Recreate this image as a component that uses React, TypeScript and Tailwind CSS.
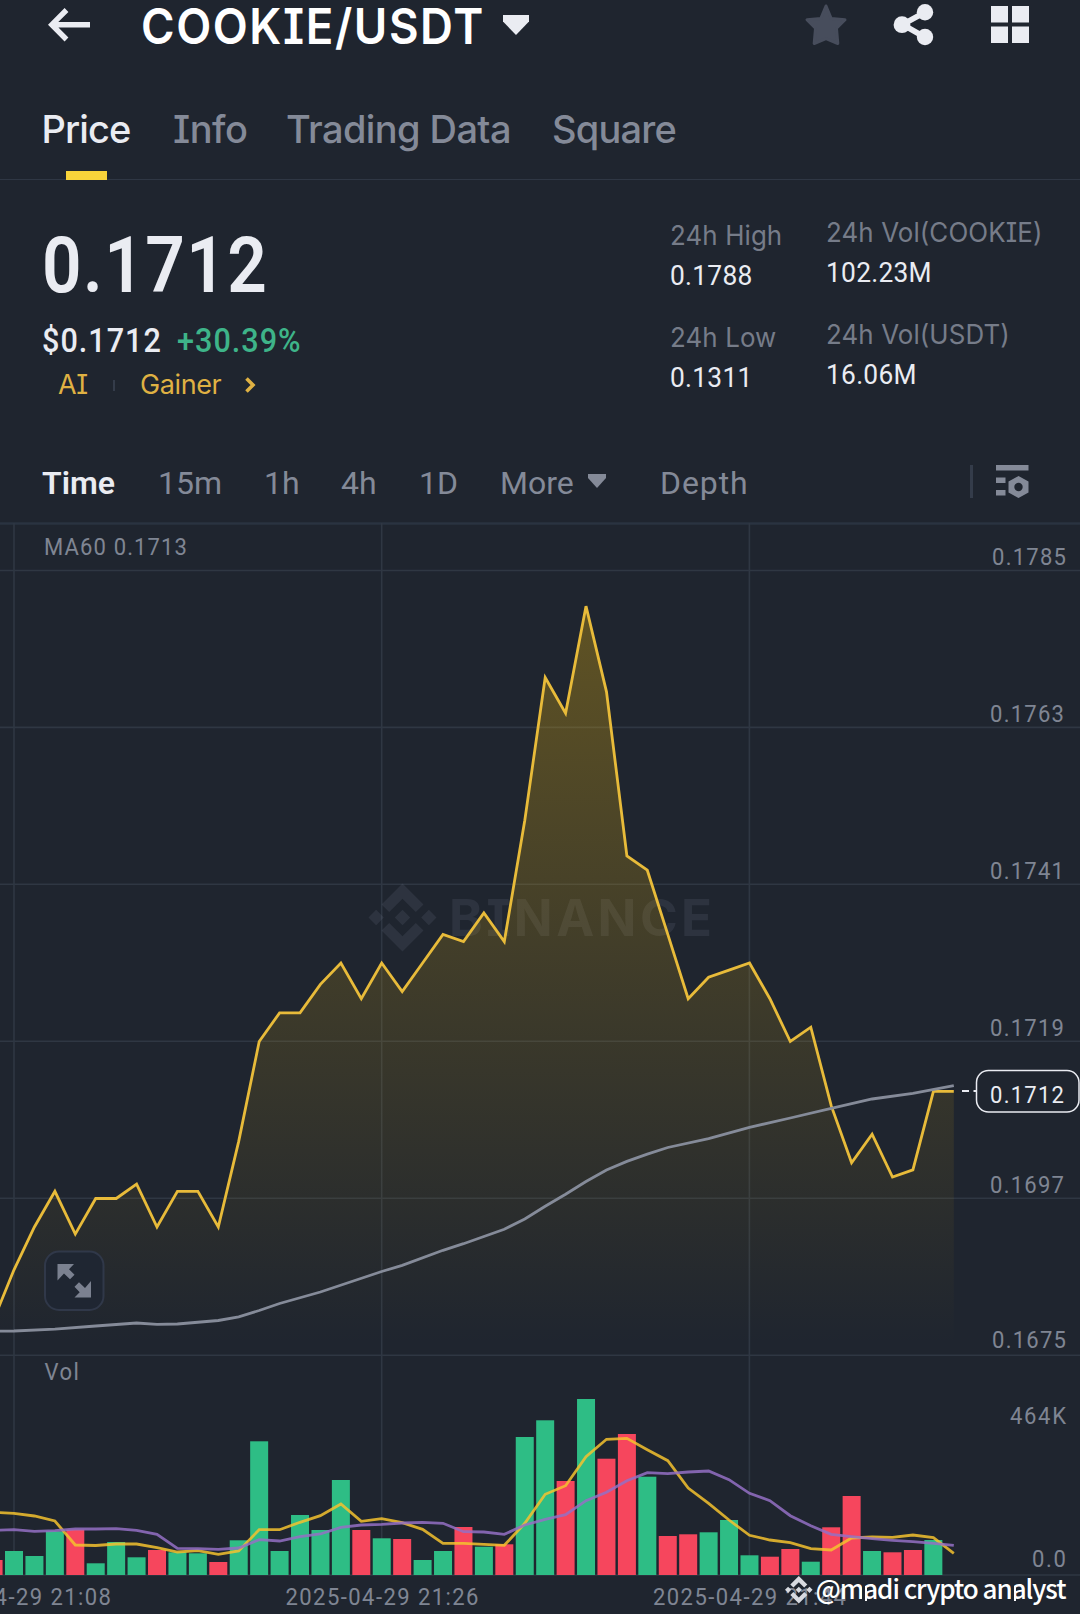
type Side = 'up' | 'down';

const STEP = 20.43;
const FIRST_X = 14;
const PRICE_TOP = 570.5;
const PX_PER_TICK = 7.136;
const VOL_BASE = 1575;

// One minute closes in ticks of 0.0001, starting one candle left of the viewport
const closes = [
    1680, 1687, 1693, 1698, 1692, 1697, 1697, 1699, 1693, 1698, 1698, 1693, 1705, 1719, 1723, 1723,
    1727, 1730, 1725, 1730, 1726, 1730, 1734, 1733, 1737, 1733, 1750, 1770, 1765, 1780, 1768, 1745,
    1743, 1734, 1725, 1728, 1729, 1730, 1725, 1719, 1721, 1710, 1702, 1706, 1700, 1701, 1712, 1712,
];

const ma60: [number, number][] = [
    [-1, 1331.3], [0, 1331], [2, 1329.2], [4, 1326], [6, 1323], [7, 1324.3], [8, 1324], [10, 1320.5], [11, 1316.8],
    [12, 1310.5], [13, 1303.5], [15, 1292], [18, 1271.5], [19, 1265.3], [21, 1250.3], [22, 1243.7], [23, 1236.5],
    [24, 1229.3], [25, 1219], [26, 1206.2], [27, 1194.3], [28, 1181.5], [29, 1170], [30, 1161.4], [31, 1154.2],
    [32, 1147.5], [34, 1138.7], [36, 1127.4], [38, 1118], [40, 1108.3], [42, 1099], [44, 1093.4], [46, 1085.7],
];

const volumes: [number, Side][] = [
    [15, 'down'], [24, 'up'], [19, 'up'], [43.7, 'up'], [45.3, 'down'], [11.7, 'up'], [33, 'up'], [17.7, 'up'],
    [25, 'down'], [22.7, 'up'], [21.7, 'up'], [13, 'down'], [34.7, 'up'], [133.7, 'up'], [24, 'up'], [60, 'up'],
    [45, 'up'], [95, 'up'], [45, 'down'], [36.7, 'up'], [36, 'down'], [15, 'up'], [24, 'up'], [48, 'down'],
    [28.3, 'up'], [30.7, 'down'], [138, 'up'], [154.7, 'up'], [94, 'down'], [176, 'up'], [116.3, 'down'],
    [141, 'down'], [98.3, 'up'], [39, 'down'], [40.7, 'down'], [42.7, 'up'], [55, 'up'], [19.7, 'up'],
    [18.3, 'down'], [26, 'down'], [13.3, 'up'], [47.7, 'down'], [79, 'down'], [24, 'up'], [22.7, 'down'],
    [25, 'down'], [35, 'up'],
];

const volFast = [
    62.8, 61.7, 59, 54, 30, 29.5, 31, 31, 27.3, 23, 24.3, 20.7, 24, 45.3, 45.3, 52.7, 59.3, 71, 53.7, 56.3, 52.3,
    45.7, 31.7, 31.7, 30.7, 29.7, 51.7, 80.7, 89.3, 118.3, 135.7, 136.7, 125.3, 114.3, 87, 71.7, 55, 39.7, 35,
    32.3, 26.3, 25, 37, 38, 37.7, 40, 37.3, 21.7,
];

const volSlow = [
    44.7, 45.3, 43.7, 44.3, 46, 46, 46.3, 44.7, 40.7, 26.7, 26.3, 25.7, 27, 35.3, 34, 38.3, 41, 47.7, 50, 50.7,
    52, 52.7, 51.7, 43.3, 43, 40.7, 50, 55.7, 60.3, 74.3, 82.7, 94.3, 102.3, 101.3, 103, 104, 95.3, 81.7, 74.3,
    59.3, 49.3, 40.7, 38.3, 36.3, 34.7, 33.3, 31.7, 29.7,
];

const xAt = (i: number) => FIRST_X + STEP * i;
const priceY = (ticks: number) => PRICE_TOP + (1785 - ticks) * PX_PER_TICK;
const toPoints = (list: [number, number][]) => list.map(([x, y]) => `${x.toFixed(1)},${y.toFixed(1)}`).join(' ');

const pricePoints = toPoints(closes.map((c, i) => [xAt(i - 1), priceY(c)]));
const maPoints = toPoints(ma60.map(([i, y]) => [xAt(i), y]));
const fastPoints = toPoints(volFast.map((h, i) => [xAt(i - 1), VOL_BASE - h]));
const slowPoints = toPoints(volSlow.map((h, i) => [xAt(i - 1), VOL_BASE - h]));

const gridRows = [570.5, 727.4, 884.3, 1041.2, 1198.2, 1355.2];
const gridCols = [14, 381.7, 749.4];

const axisLabels = [
    { text: '0.1785', x: 992, y: 565, w: 74 },
    { text: '0.1763', x: 990, y: 722, w: 74 },
    { text: '0.1741', x: 990, y: 879, w: 74 },
    { text: '0.1719', x: 990, y: 1036, w: 74 },
    { text: '0.1697', x: 990, y: 1193, w: 74 },
    { text: '0.1675', x: 992, y: 1347.5, w: 74 },
    { text: '464K', x: 1010, y: 1424, w: 56 },
    { text: '0.0', x: 1032, y: 1567, w: 34 },
    { text: 'MA60 0.1713', x: 44, y: 555, w: 143 },
    { text: 'Vol', x: 44.5, y: 1380, w: 34.5 },
    { text: '2025-04-29 21:08', x: -82, y: 1605, w: 193 },
    { text: '2025-04-29 21:26', x: 285.5, y: 1605, w: 193 },
    { text: '2025-04-29 21:44', x: 653, y: 1605, w: 193 },
];

function BinanceMark() {
    return (
        <path d="M12 0 19.4 7.4 16.7 10.1 12 5.4 7.3 10.1 4.6 7.4ZM2.7 9.3 5.4 12 2.7 14.7 0 12ZM12 9.3 14.7 12 12 14.7 9.3 12ZM21.3 9.3 24 12 21.3 14.7 18.6 12ZM4.6 16.6 7.3 13.9 12 18.6 16.7 13.9 19.4 16.6 12 24Z" />
    );
}

function Header() {
    return (
        <header className="flex h-[84px] items-start text-[#eaecf2]">
            <svg className="ml-[48px] mt-[8px] h-[34px] w-[43px]" viewBox="0 0 43 34" fill="none" stroke="currentColor" strokeWidth="5.4">
                <path d="M42 16.7H5M18.5 2 3.8 16.7 18.5 31.5" />
            </svg>
            <h1 className="ml-[50px] w-[341px] origin-left scale-x-[0.93] whitespace-nowrap text-[49px] font-semibold leading-[53px] tracking-[1.7px] text-white">COOKIE/USDT</h1>
            <svg className="ml-[21px] mt-[15px] h-[20px] w-[26px]" viewBox="0 0 26 20" fill="currentColor">
                <path d="M0 0H26V6.5L13 20 0 6.5Z" />
            </svg>
            <svg className="ml-[275px] mt-[3px] h-[44px] w-[44px] text-[#474d5c]" viewBox="0 0 44 44" fill="currentColor" stroke="currentColor" strokeWidth="3" strokeLinejoin="round">
                <path d="M22 3 27.2 15.6 41 16.8 32.5 25.3 33.8 40.5 22 35.7 10.2 40.5 11.5 25.3 3 16.8 16.8 15.6Z" />
            </svg>
            <svg className="ml-[45px] mt-[4px] h-[42px] w-[41px]" viewBox="0 0 41 42" fill="currentColor">
                <path d="M31.5 8.5 9.5 20.5 31.5 33" fill="none" stroke="currentColor" strokeWidth="5.6" />
                <circle cx="32" cy="8.3" r="8.2" />
                <circle cx="9" cy="20.7" r="8.4" />
                <circle cx="32" cy="33" r="8.2" />
            </svg>
            <svg className="ml-[57px] mt-[6px] h-[37px] w-[38px]" viewBox="0 0 38 37" fill="currentColor">
                <path d="M0 0H17V16.5H0ZM21 0H38V16.5H21ZM0 20.5H17V37H0ZM21 20.5H38V37H21Z" />
            </svg>
        </header>
    );
}

function Tabs() {
    return (
        <nav className="flex h-[96px] items-start gap-[42px] border-b border-[#2f3744] pl-[41px] pt-[20px] text-[38px] font-medium leading-[51px] text-[#848a98]">
            <div className="flex w-[90px] flex-col items-center text-[#eaecf2]">
                <span className="tracking-[-0.9px]">Price</span>
                <span className="mt-[16px] h-[9px] w-[41px] bg-[#f8d33a]" />
            </div>
            <span className="w-[71px] tracking-[-0.5px]">Info</span>
            <span className="w-[224px] whitespace-nowrap tracking-[-0.6px]">Trading Data</span>
            <span className="tracking-[-0.8px]">Square</span>
        </nav>
    );
}

function Stat({ label, value }: { label: string; value: string }) {
    return (
        <div className="flex h-[102px] flex-col whitespace-nowrap">
            <span className="origin-left scale-x-[0.96] text-[27px] leading-[40px] tracking-[0.1px] text-[#767c89]">{label}</span>
            <span className="origin-left scale-x-[0.94] font-[Roboto] text-[28px] leading-[40px] tracking-[0.3px] text-[#eaecf2]">{value}</span>
        </div>
    );
}

function Ticker() {
    return (
        <section className="flex h-[265px]">
            <div className="w-[670px] pl-[42px] pt-[40px]">
                <div className="origin-left scale-x-90 font-[Roboto] text-[77px] font-semibold leading-[92px] tracking-[1.6px] text-[#eaecf2]">0.1712</div>
                <div className="mt-[7px] flex origin-left scale-x-[0.9] gap-[17px] font-[Roboto] text-[34px] font-medium leading-[42px] tracking-[1.1px]">
                    <span className="text-[#eaecf2]">$0.1712</span>
                    <span className="text-[#3eb489]">+30.39%</span>
                </div>
                <div className="mt-[4px] flex items-center pl-[16px] text-[27px] leading-[40px] text-[#dfb143]">
                    <span className="w-[55px] tracking-[-0.5px]">AI</span>
                    <span className="h-[11px] w-[2px] bg-[#343c4a]" />
                    <span className="ml-[25px] w-[105px] tracking-[-0.4px]">Gainer</span>
                    <svg className="h-[16px] w-[11px]" viewBox="0 0 11 16" fill="none" stroke="currentColor" strokeWidth="3.6">
                        <path d="M1.5 1.5 8 8 1.5 14.5" />
                    </svg>
                </div>
            </div>
            <div className="w-[156px] pt-[36px]">
                <Stat label="24h High" value="0.1788" />
                <Stat label="24h Low" value="0.1311" />
            </div>
            <div className="pt-[33px]">
                <Stat label="24h Vol(COOKIE)" value="102.23M" />
                <Stat label="24h Vol(USDT)" value="16.06M" />
            </div>
        </section>
    );
}

function Intervals() {
    return (
        <div className="flex h-[77px] items-center whitespace-nowrap pb-[1px] pl-[42px] font-[Roboto] text-[32px] text-[#848a98]">
            <span className="w-[116px] font-semibold text-[#eaecf2]">Time</span>
            <span className="w-[106px]">15m</span>
            <span className="w-[77px]">1h</span>
            <span className="w-[78px]">4h</span>
            <span className="w-[81px]">1D</span>
            <span className="w-[88px]">More</span>
            <svg className="-mt-[4px] h-[14px] w-[18px]" viewBox="0 0 18 14" fill="currentColor">
                <path d="M0 0H18V4L9 14 0 4Z" />
            </svg>
            <span className="ml-[54px] w-[310px] tracking-[0.9px]">Depth</span>
            <span className="-mt-[4px] h-[33px] w-[3px] bg-[#343c4a]" />
            <svg className="-mt-[4px] ml-[23px] h-[33px] w-[33px]" viewBox="0 0 33 33" fill="currentColor">
                <path d="M0 0H32.5V5.5H0ZM0 12.5H9.5V18H0ZM0 25H9.5V30.5H0Z" />
                <path fillRule="evenodd" d="M22.5 11 32.5 16.5V27.5L22.5 33 12.5 27.5V16.5ZM22.5 17.8A4.2 4.2 0 1 0 22.5 26.2 4.2 4.2 0 1 0 22.5 17.8Z" />
            </svg>
        </div>
    );
}

function Chart() {
    return (
        <svg className="block h-[1092px] w-[1080px]" viewBox="0 522 1080 1092" fontFamily="Roboto, sans-serif">
            <defs>
                <linearGradient id="priceFill" gradientUnits="userSpaceOnUse" x1="0" y1="606" x2="0" y2="1345">
                    <stop offset="0" stopColor="#f0b90b" stopOpacity="0.31" />
                    <stop offset="1" stopColor="#f0b90b" stopOpacity="0" />
                </linearGradient>
            </defs>

            <g stroke="#2f3743" strokeWidth="1.6">
                <path d="M0 523.5H1080" stroke="#2a3341" strokeWidth="2.5" />
                {gridRows.map((y) => <path key={y} d={`M0 ${y}H1080`} />)}
                {gridCols.map((x) => <path key={x} d={`M${x} 523V${VOL_BASE}`} />)}
                <path d={`M0 ${VOL_BASE}H1080`} />
            </g>

            <g fill="#8a90a0" fillOpacity="0.14">
                <g transform="translate(368.5 883.5) scale(2.833)"><BinanceMark /></g>
                <text x="449" y="936" fontFamily="Inter, sans-serif" fontWeight="700" fontSize="51" textLength="263">BINANCE</text>
            </g>

            <polygon points={`${pricePoints} ${xAt(46)},1345 ${xAt(-1)},1345`} fill="url(#priceFill)" />
            <polyline points={pricePoints} fill="none" stroke="#e8bb3a" strokeWidth="2.8" />
            <polyline points={maPoints} fill="none" stroke="#858b99" strokeWidth="2.8" />

            {volumes.map(([h, side], i) => (
                <rect key={i} x={xAt(i - 1) - 9} y={VOL_BASE - h} width="18" height={h} fill={side === 'up' ? '#2ebd85' : '#f6465d'} />
            ))}
            <polyline points={fastPoints} fill="none" stroke="#f5c22e" strokeOpacity="0.85" strokeWidth="2.8" />
            <polyline points={slowPoints} fill="none" stroke="#9470c4" strokeOpacity="0.85" strokeWidth="2.8" />

            <g fill="#7f8593" fontSize="24.5">
                {axisLabels.map((l) => (
                    // condensed figures: squeeze the glyphs, keep the label's full width
                    <text key={l.text} transform={`translate(${l.x} ${l.y}) scale(0.9 1)`} textLength={l.w / 0.9}>{l.text}</text>
                ))}
            </g>

            {/* last price tag */}
            <path d="M962 1091H969M973.5 1091H976" stroke="#eaecf2" strokeWidth="2" />
            <rect x="976.5" y="1070.5" width="102.5" height="41.5" rx="12" fill="#1f252f" stroke="#eaecf2" strokeWidth="1.5" />
            <text transform="translate(990 1103) scale(0.9 1)" fill="#eaecf2" fontSize="24.5" textLength="82.2">0.1712</text>

            {/* fullscreen toggle */}
            <rect x="45" y="1251.5" width="58.5" height="58.5" rx="14" fill="#1f2632" stroke="#303849" strokeWidth="2" />
            <g fill="#7b8190">
                <path d="M57.500 1264H74L69 1269.2 74.500 1274.7 70 1279.2 64 1273.5 57.500 1280.5Z" />
                <path d="M91 1297.5H74.500L79.700 1292.3 74.500 1286.8 79 1282.3 85 1288 91 1281Z" />
            </g>

            {/* author watermark */}
            <g fill="#d8dae0" transform="translate(785 1576) scale(1.15)"><BinanceMark /></g>
            <text x="815.5" y="1599" fill="#ffffff" fontFamily="'Noto Sans CJK SC', sans-serif" fontWeight="500" fontSize="26" textLength="251">@madi crypto analyst</text>
            <path d="M863.5 1584V1601M1012.5 1584V1601" stroke="#1f252f" strokeWidth="3" />
            <path d="M866 1586V1601M1015 1586V1601" stroke="#ffffff" strokeWidth="2" />
        </svg>
    );
}

export default function App() {
    return (
        <main className="h-[1614px] w-[1080px] overflow-hidden bg-[#1f252f] font-[Inter,sans-serif] [font-feature-settings:'cv08']">
            <Header />
            <Tabs />
            <Ticker />
            <Intervals />
            <Chart />
        </main>
    );
}
